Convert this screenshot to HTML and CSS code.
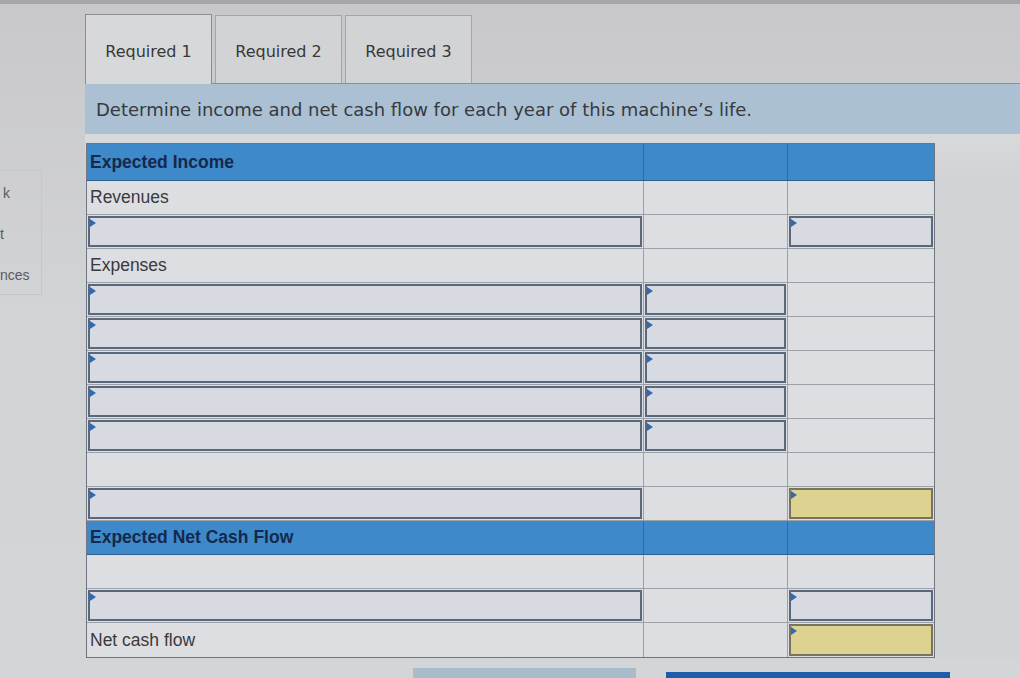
FILE: index.html
```html
<!DOCTYPE html>
<html>
<head>
<meta charset="utf-8">
<link rel="stylesheet" href="styles.css">
</head>
<body>
<div class="topbar"></div>
<div class="layout">
  <aside class="sidebar">
    <div class="side-card">
      <div class="side-item k">k</div>
      <div class="side-item t">t</div>
      <div class="side-item n">nces</div>
    </div>
  </aside>
  <main class="main">
    <div class="tabs">
      <div class="tab active">Required 1</div>
      <div class="tab">Required 2</div>
      <div class="tab">Required 3</div>
    </div>
    <div class="band">Determine income and net cash flow for each year of this machine’s life.</div>
    <div class="sheet">
      <div class="grid">
        <div class="cell head label">Expected Income</div>
        <div class="cell head"></div>
        <div class="cell head last"></div>

        <div class="cell label">Revenues</div>
        <div class="cell"></div>
        <div class="cell last"></div>

        <div class="cell pad"><div class="inp"></div></div>
        <div class="cell"></div>
        <div class="cell pad last"><div class="inp"></div></div>

        <div class="cell label">Expenses</div>
        <div class="cell"></div>
        <div class="cell last"></div>

        <div class="cell pad"><div class="inp"></div></div>
        <div class="cell pad"><div class="inp"></div></div>
        <div class="cell last"></div>

        <div class="cell pad"><div class="inp"></div></div>
        <div class="cell pad"><div class="inp"></div></div>
        <div class="cell last"></div>

        <div class="cell pad"><div class="inp"></div></div>
        <div class="cell pad"><div class="inp"></div></div>
        <div class="cell last"></div>

        <div class="cell pad"><div class="inp"></div></div>
        <div class="cell pad"><div class="inp"></div></div>
        <div class="cell last"></div>

        <div class="cell pad"><div class="inp"></div></div>
        <div class="cell pad"><div class="inp"></div></div>
        <div class="cell last"></div>

        <div class="cell"></div>
        <div class="cell"></div>
        <div class="cell last"></div>

        <div class="cell pad"><div class="inp"></div></div>
        <div class="cell"></div>
        <div class="cell pad last"><div class="inp yellow"></div></div>

        <div class="cell head label">Expected Net Cash Flow</div>
        <div class="cell head"></div>
        <div class="cell head last"></div>

        <div class="cell"></div>
        <div class="cell"></div>
        <div class="cell last"></div>

        <div class="cell pad"><div class="inp"></div></div>
        <div class="cell"></div>
        <div class="cell pad last"><div class="inp"></div></div>

        <div class="cell label bottom">Net cash flow</div>
        <div class="cell bottom"></div>
        <div class="cell pad last bottom"><div class="inp yellow"></div></div>
      </div>
    </div>
    <div class="buttons">
      <div class="btn light"></div>
      <div class="btn dark"></div>
    </div>
  </main>
</div>
</body>
</html>
```

FILE: styles.css
```css
html, body {
  margin: 0;
  padding: 0;
}
body {
  width: 1020px;
  height: 678px;
  overflow: hidden;
  background: linear-gradient(#c8c8ca, #d2d3d5 300px, #d4d5d7);
  font-family: "Liberation Sans", Arial, sans-serif;
}
.topbar {
  height: 4px;
  background: #a6a6a8;
}
.layout {
  display: flex;
}
.sidebar {
  width: 85px;
  flex-shrink: 0;
}
.side-card {
  margin-top: 166px;
  width: 42px;
  height: 125px;
  box-sizing: border-box;
  border: 1px solid #c6c7c9;
  border-left: none;
  padding-top: 2px;
}
.side-item {
  height: 41px;
  line-height: 41px;
  font-size: 14px;
  color: #5a5a5c;
}
.side-item.k {
  padding-left: 3px;
}
.side-item.t {
  padding-left: 0;
}
.side-item.n {
  padding-left: 0;
}
.main {
  flex: 1;
}
.tabs {
  display: flex;
  align-items: flex-end;
  box-sizing: border-box;
  height: 80px;
  border-bottom: 1px solid #8e8f92;
}
.tab {
  width: 127px;
  height: 68px;
  box-sizing: border-box;
  margin-right: 3px;
  border: 1px solid #a4a5a8;
  border-bottom: none;
  background: #d2d3d5;
  display: flex;
  align-items: center;
  justify-content: center;
  padding-top: 4px;
  font-family: "DejaVu Sans", Verdana, sans-serif;
  font-size: 16px;
  color: #383838;
}
.tab.active {
  height: 70px;
  margin-bottom: -1px;
  background: #d7d8da;
  border-color: #8c8d90;
}
.band {
  height: 50px;
  line-height: 52px;
  background: #abc0d3;
  padding-left: 11px;
  font-family: "DejaVu Sans", Verdana, sans-serif;
  font-size: 18px;
  color: #363a40;
}
.sheet {
  padding-top: 9px;
  padding-left: 1px;
  background: linear-gradient(#d8d9db, #d2d3d5 40px);
}
.grid {
  display: grid;
  grid-template-columns: 557px 144px 146px;
  grid-auto-rows: 34px;
  grid-template-rows: 37px;
  width: 847px;
  border: 1px solid #6f7580;
  background: #dcdee2;
}
.cell {
  box-sizing: border-box;
  border-right: 1px solid #9ca0a7;
  border-bottom: 1px solid #9ca0a7;
  font-size: 17.5px;
  color: #3a3a3c;
  display: flex;
  align-items: center;
}
.cell.last {
  border-right: none;
}
.cell.bottom {
  border-bottom: none;
}
.cell.label {
  padding-left: 3px;
}
.cell.head {
  background: #3d89c9;
  border-right-color: #2d6a9f;
  border-bottom: 1px solid #2c5f8e;
  font-weight: bold;
  color: #16284c;
  font-size: 17.5px;
}
.cell.head.last {
  border-right: none;
}
.cell.pad {
  padding: 1px;
  align-items: stretch;
}
.inp {
  flex: 1;
  position: relative;
  box-sizing: border-box;
  border: 2px solid #5b677a;
  background: #d7dbe1;
}
.inp::before {
  content: "";
  position: absolute;
  left: 0;
  top: 1px;
  border-top: 4px solid transparent;
  border-bottom: 4px solid transparent;
  border-left: 6px solid #2f69b3;
}
.inp.yellow {
  background: #ddd28f;
  border-color: #76735f;
}
.buttons {
  display: flex;
  align-items: flex-start;
  padding-top: 10px;
  padding-left: 328px;
}
.btn {
  height: 20px;
}
.btn.light {
  width: 223px;
  background: #a9bccb;
}
.btn.dark {
  width: 284px;
  margin-left: 30px;
  margin-top: 4px;
  background: #1f5cab;
}
```
